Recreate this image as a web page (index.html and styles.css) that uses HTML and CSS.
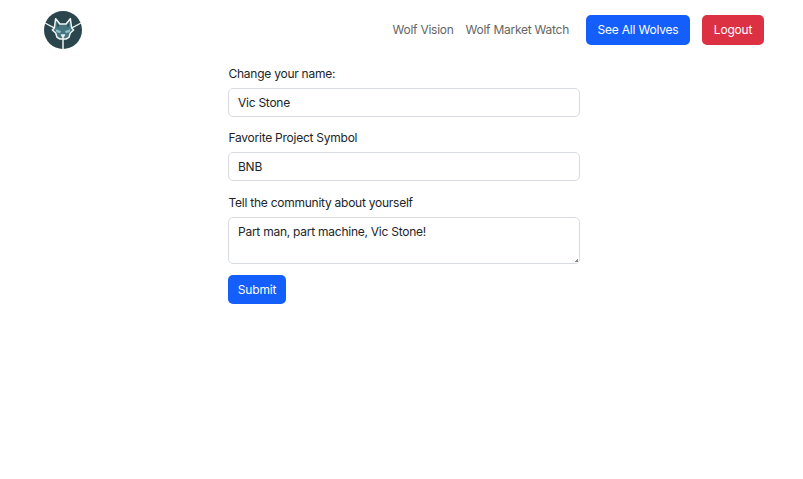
FILE: index.html
```html
<!DOCTYPE html>
<html lang="en">
<head>
<meta charset="utf-8">
<title>Edit profile</title>
<link rel="stylesheet" href="styles.css">
</head>
<body>
<header class="navbar">
  <a class="brand" href="#" aria-label="Home">
    <svg class="logo" viewBox="18 13 114 114">
      <circle cx="75" cy="70" r="57" fill="#2b454c"/>
      <path d="M21 49 51 65M129 49 99 65" stroke="#edf4f4" stroke-width="4" fill="none"/>
      <path d="M53 36 66 52H84L97 36 101 64 107 70 97 79 93 92 84 97H66L57 92 53 79 43 70 49 64Z" fill="#467580" stroke="#f0f5f5" stroke-width="4.5" stroke-linejoin="round"/>
      <path d="M57 49 64 57 59 62ZM93 49 86 57 91 62Z" fill="#2b454c"/>
      <path d="M53 68 69 73 66 80 55 76ZM97 68 81 73 84 80 95 76Z" fill="#8fc0c6"/>
      <path d="M68 83H82L79 90H71Z" fill="#e9f2f2"/>
      <path d="M75 86V127" stroke="#f0f5f5" stroke-width="4.5"/>
    </svg>
  </a>
  <nav class="links">
    <a class="link vision" href="#">Wolf Vision</a>
    <a class="link market" href="#">Wolf Market Watch</a>
    <button class="btn primary wolves">See All Wolves</button>
    <button class="btn danger logout">Logout</button>
  </nav>
</header>
<form class="profile">
  <label for="name">Change your name:</label>
  <input id="name" class="control" value="Vic Stone">
  <label for="symbol">Favorite Project Symbol</label>
  <input id="symbol" class="control" value="BNB">
  <label for="about">Tell the community about yourself</label>
  <div class="area-wrap">
    <textarea id="about" class="control area">Part man, part machine, Vic Stone!</textarea>
    <span class="grip"></span>
  </div>
  <button class="btn primary submit" type="button">Submit</button>
</form>
</body>
</html>
```
FILE: styles.css
```css
* { box-sizing: border-box; }
body {
  margin: 0;
  background: #fff;
  color: #212529;
  font: 12px/18px Inter, "Liberation Sans", sans-serif;
  letter-spacing: -0.25px;
}
.navbar {
  display: flex;
  align-items: center;
  justify-content: space-between;
  height: 59px;
  padding: 0 39px 0 44px;
}
.logo { display: block; width: 38px; height: 38px; }
.links { display: flex; align-items: center; }
.link { padding-left: 0.5px; color: #656565; text-decoration: none; white-space: nowrap; }
.vision { width: 73px; }
.market { width: 121px; }
.btn {
  border: 0;
  border-radius: 5px;
  padding: 0;
  color: #fff;
  font: inherit;
  letter-spacing: -0.2px;
  white-space: nowrap;
}
.primary { background: #145efc; }
.danger { background: #dc3043; }
.wolves { width: 104px; height: 30px; margin-right: 12px; }
.logout { width: 62px; height: 30px; }
.profile {
  display: flex;
  flex-direction: column;
  width: 352px;
  margin: 6px 0 0 228px;
}
label { height: 18px; margin-bottom: 5px; padding-left: 0.5px; }
.control {
  display: block;
  width: 100%;
  height: 29px;
  margin: 0 0 12px;
  padding: 4px 9px;
  border: 1px solid #d8dce1;
  border-radius: 5px;
  background: #fff;
  color: #212529;
  font: inherit;
  letter-spacing: inherit;
  outline: 0;
}
#symbol { margin-bottom: 13px; }
.area-wrap { position: relative; margin-bottom: 11px; }
.area { height: 47px; margin: 0; padding-top: 5px; resize: none; }
.grip {
  position: absolute;
  right: 2px;
  bottom: 2px;
  width: 3px;
  height: 3px;
  background: linear-gradient(135deg, transparent 40%, #8b8b8b 40%);
}
.submit { width: 58px; height: 29px; }
```
